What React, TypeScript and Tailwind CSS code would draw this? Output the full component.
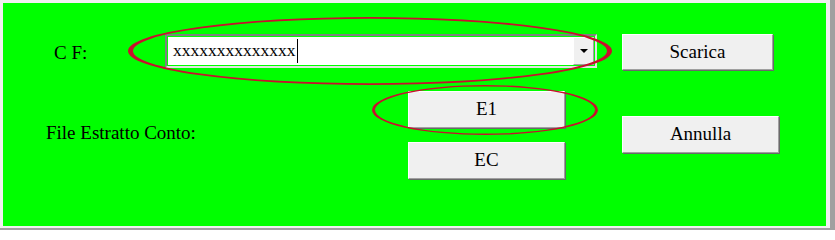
import React from "react";

const buttons = {
  e1: "E1",
  ec: "EC",
};

const WinButton = ({ label, className }: { label: string; className: string }) => {
  return (
    <button
      className={`flex items-center justify-center bg-[#f0f0f0] border border-t-white border-l-white border-b-[#a0a0a0] border-r-[#a0a0a0] shadow-[1px_1px_0_#696969] font-['Liberation_Serif',serif] text-[19px] text-black ${className}`}
    >
      {label}
    </button>
  );
};

const App = () => {
  return (
    <div className="relative w-[835px] h-[230px] bg-[#f0f0f0] border-r-[5px] border-b-[2px] border-r-[#a0a0a0] border-b-[#a0a0a0] pt-[3px] pl-[3px] pr-[4px] pb-[2px] font-['Liberation_Serif',serif]">
      <div className="w-full h-full bg-[#00ff00] flex flex-col">
        {/* riga codice fiscale */}
        <div className="flex flex-row items-start mt-[31px] pl-[51px]">
          <div className="w-[111px] h-[36px] flex items-center text-[19px] text-black leading-none">
            C F:
          </div>
          <div className="w-[432px] h-[34px] border-2 border-t-[#808080] border-l-[#808080] border-b-[#e3e3e3] border-r-[#e3e3e3] bg-[#00ff00] p-[1px] flex flex-row">
            <div className="flex-1 bg-white flex items-center pl-[5px]">
              <span className="text-[17.5px] text-black leading-none">xxxxxxxxxxxxxx</span>
              <span className="w-[1px] h-[24px] bg-black ml-[1px]" />
            </div>
            <div className="w-[21px] h-full bg-[#f0f0f0] border border-t-white border-l-white border-b-[#a0a0a0] border-r-[#a0a0a0] flex items-center justify-center">
              <div className="w-0 h-0 border-l-[4px] border-r-[4px] border-t-[4px] border-l-transparent border-r-transparent border-t-black" />
            </div>
          </div>
          <WinButton label="Scarica" className="ml-[25px] w-[151px] h-[36px]" />
        </div>

        {/* riga file estratto conto */}
        <div className="flex flex-row items-start mt-[21px] pl-[43px]">
          <div className="w-[362px] mt-[31px] text-[19px] leading-[22px] text-black">
            File Estratto Conto:
          </div>
          <div className="flex flex-col gap-[14px] w-[157px]">
            <WinButton label={buttons.e1} className="w-full h-[37px]" />
            <WinButton label={buttons.ec} className="w-full h-[37px]" />
          </div>
          <WinButton label="Annulla" className="ml-[57px] mt-[25px] w-[157px] h-[37px]" />
        </div>
      </div>

      {/* evidenziazioni a mano */}
      <svg
        className="absolute left-0 top-0 pointer-events-none"
        width="835"
        height="230"
        viewBox="0 0 835 230"
      >
        <path
          fillRule="evenodd"
          fill="#c8102e"
          d="M128 51 a242 34 0 1 0 484 0 a242 34 0 1 0 -484 0 Z M133 51 a237 32.2 0 1 0 474 0 a237 32.2 0 1 0 -474 0 Z"
        />
        <path
          fillRule="evenodd"
          fill="#c8102e"
          d="M372 110 a113 25 0 1 0 226 0 a113 25 0 1 0 -226 0 Z M375 110 a110 23.6 0 1 0 220 0 a110 23.6 0 1 0 -220 0 Z"
        />
      </svg>
    </div>
  );
};

export default App;
